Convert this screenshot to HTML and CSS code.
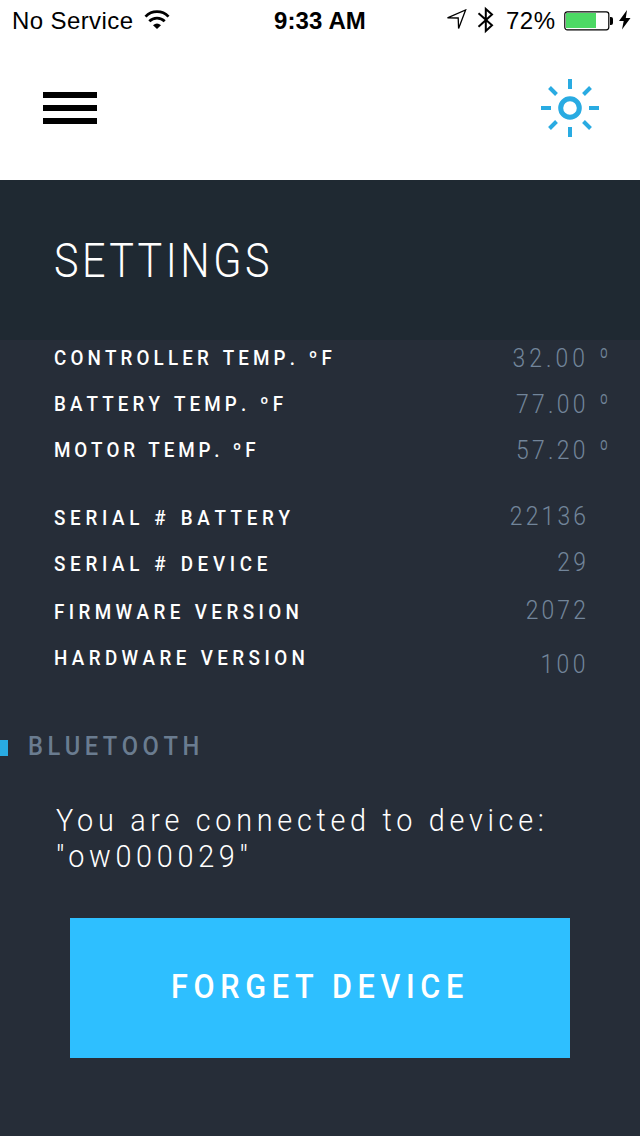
FILE: index.html
```html
<!DOCTYPE html>
<html lang="en">
<head>
<meta charset="utf-8">
<title>Settings</title>
<link rel="stylesheet" href="styles.css">
</head>
<body>
<div class="status">
  <div class="status-left">
    <span class="carrier">No Service</span>
    <svg class="wifi" width="26" height="20" viewBox="0 0 26 20" fill="none" stroke="#000" stroke-width="2.8"><path d="M1.5 7.6A16 16 0 0 1 24.5 7.6"/><path d="M5.3 12.2A11 11 0 0 1 20.7 12.2"/><path d="M13 20L9 16.2A6.2 6.2 0 0 1 17 16.2Z" fill="#000" stroke="none"/></svg>
  </div>
  <span class="clock">9:33 AM</span>
  <div class="status-right">
    <svg class="location" width="22" height="22" viewBox="0 0 22 22" fill="none" stroke="#000" stroke-width="1.3"><path d="M1.5 8.8L19.6 1L12.6 19.4L12.2 9Z"/></svg>
    <svg class="bt" width="18" height="28" viewBox="0 0 18 28" fill="none" stroke="#000" stroke-width="2"><path d="M1.5 7.2L15 19.3L8.8 25V3L15 8.6L1.5 20.8"/></svg>
    <span class="percent">72%</span>
    <svg class="battery" width="50" height="20" viewBox="0 0 50 20"><rect x=".8" y=".8" width="44" height="18" rx="2.5" fill="none" stroke="#000" stroke-width="1.2"/><rect x="2" y="2" width="30" height="15" fill="#4cd964"/><path d="M46 6h1q2 0 2 2v4q0 2-2 2h-1z"/></svg>
    <svg class="bolt" width="12" height="20" viewBox="0 0 12 20"><path d="M8 0L0 11H4.7L3 19.5L11.5 8H6.8Z"/></svg>
  </div>
</div>
<nav class="nav">
  <div class="menu"><i></i><i></i><i></i></div>
  <svg class="sun" width="60" height="60" viewBox="-30 -30 60 60" fill="none" stroke="#29abe2" stroke-width="4"><circle r="9.3" stroke-width="5"/><path d="M0-29V-19M0 29V19M-29 0H-19M29 0H19M-20.5-20.5L-13.5-13.5M20.5-20.5L13.5-13.5M-20.5 20.5L-13.5 13.5M20.5 20.5L13.5 13.5"/></svg>
</nav>
<header class="heading"><h1>SETTINGS</h1></header>
<main>
  <div class="rows">
    <div class="row controller"><span class="label">CONTROLLER TEMP. ºF</span><span class="value">32.00</span><span class="unit">º</span></div>
    <div class="row"><span class="label">BATTERY TEMP. ºF</span><span class="value">77.00</span><span class="unit">º</span></div>
    <div class="row motor"><span class="label">MOTOR TEMP. ºF</span><span class="value">57.20</span><span class="unit">º</span></div>
    <div class="row info serial"><span class="label">SERIAL # BATTERY</span><span class="value">22136</span><span class="unit"></span></div>
    <div class="row info serial device"><span class="label">SERIAL # DEVICE</span><span class="value">29</span><span class="unit"></span></div>
    <div class="row info version"><span class="label">FIRMWARE VERSION</span><span class="value">2072</span><span class="unit"></span></div>
    <div class="row version hardware"><span class="label">HARDWARE VERSION</span><span class="value">100</span><span class="unit"></span></div>
  </div>
  <h2 class="section"><i class="marker"></i><span>BLUETOOTH</span></h2>
  <p class="message"><span class="line">You are connected to device:</span><span class="line">"ow000029"</span></p>
  <button class="forget"><span>FORGET DEVICE</span></button>
</main>
</body>
</html>
```

FILE: styles.css
```css
* { box-sizing: border-box; }
body { margin: 0; width: 640px; height: 1136px; overflow: hidden; background: #262d38; color: #fff; font-family: Roboto, "Liberation Sans", sans-serif; font-kerning: none; }
.status { display: grid; grid-template-columns: 1fr auto 1fr; height: 40px; background: #fff; color: #000; font: 24px/42px "Liberation Sans", Arial, sans-serif; }
.status-left, .status-right { display: flex; align-items: flex-start; }
.status-left { padding-left: 12px; }
.carrier { letter-spacing: .4px; width: 132px; white-space: nowrap; }
.wifi { margin: 9px 0 0 -.5px; }
.clock { font-weight: 700; letter-spacing: .1px; }
.status-right { justify-content: flex-end; padding-right: 9px; }
.location { margin-top: 9px; }
.bt { margin: 6px 0 0 9px; }
.percent { margin-left: 11px; width: 58px; letter-spacing: .5px; }
.battery { margin-top: 10.5px; }
.bolt { margin: 10px 0 0 5px; }
.nav { display: flex; justify-content: space-between; height: 140px; padding: 38px 40px 0 43px; background: #fff; }
.menu { display: flex; flex-direction: column; gap: 7px; width: 54px; padding-top: 14px; }
.menu i { height: 6px; background: #000; }
.heading { height: 160px; padding: 51px 54px; background: #1f2932; }
h1 { margin: 0; font-size: 48px; line-height: 60px; font-weight: 300; letter-spacing: 4.2px; transform: scaleX(.86); transform-origin: left; white-space: nowrap; }
.rows { padding: 3px 0 0 54px; }
.row { display: flex; height: 46px; line-height: 30px; }
.label { flex: 1; font-size: 20px; font-weight: 500; letter-spacing: 4.4px; word-spacing: 1px; transform: scaleX(.94); transform-origin: left; white-space: nowrap; }
.value { font-size: 26px; font-weight: 300; letter-spacing: 3.8px; color: #72859a; transform: scaleX(.88); transform-origin: right; }
.unit { width: 51px; padding-left: 14px; margin-top: -1px; font-size: 26px; font-weight: 300; color: #72859a; transform: scaleX(.75); transform-origin: left; }
.controller .value { letter-spacing: 4.6px; }
.motor { height: 68px; }
.motor .label { letter-spacing: 4.1px; }
.serial .label { letter-spacing: 5px; }
.version .label { letter-spacing: 4.7px; }
.device { height: 48px; }
.info .value { margin-top: -2px; letter-spacing: 3.6px; }
.hardware .value { margin-top: 6px; }
.section { display: flex; align-items: flex-start; margin: 42px 0 0; height: 40px; color: #6a7c90; font-size: 26px; line-height: 30px; font-weight: 500; letter-spacing: 5px; }
.section span { margin-left: 20px; transform: scaleX(.91); transform-origin: left; }
.marker { width: 8px; height: 16px; margin-top: 9px; background: #29abe2; }
.message { margin: 32px 0 0 56px; font-size: 31px; line-height: 36px; font-weight: 300; }
.line { display: block; font-kerning: normal; letter-spacing: 5.05px; transform: scaleX(.93); transform-origin: left; white-space: nowrap; }
.forget { display: block; width: 500px; height: 140px; margin: 43px 0 0 70px; padding: 0 0 4px; border: 0; border-radius: 0; background: #2ebfff; color: #fff; font: 500 34px/40px Roboto, sans-serif; }
.forget span { display: block; letter-spacing: 6.3px; transform: scaleX(.9); white-space: nowrap; }
```
